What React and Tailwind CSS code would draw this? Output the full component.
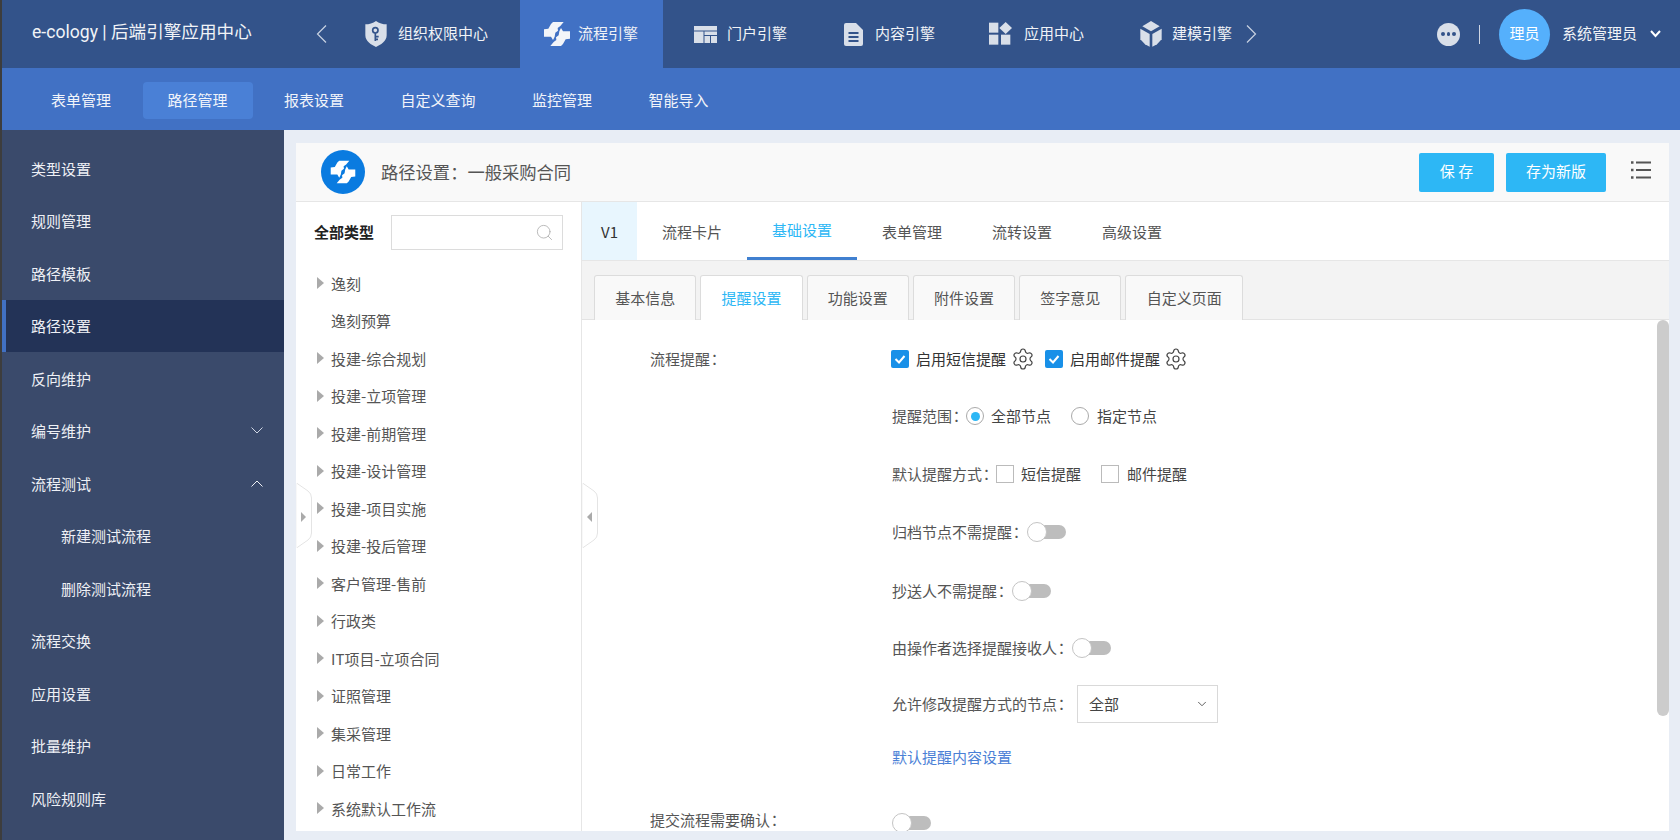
import React from "react";
import { Settings, Search, ChevronDown } from "lucide-react";

const ic = "#d9dfe9";
const FlowPaths = ({ fill }) => (
  <g fill={fill}>
    <polygon points="42,18 74,18 64,30 56,36 57,44 49,50 47,62 42,72 36,62 15,62 15,40 28,38 36,24" />
    <polygon points="66,90 34,90 44,78 52,72 51,64 59,58 61,46 66,36 72,46 93,46 93,68 80,70 72,84" />
  </g>
);
const IconShield = () => (
  <svg viewBox="0 0 108 108" className="w-[36px] h-[36px] -m-[8px]">
    <path d="M54 15 C45 22 33 25 22 25 V58 C22 76 40 87 54 93 C68 87 86 76 86 58 V25 C75 25 63 22 54 15Z" fill={ic} />
    <circle cx="52" cy="43" r="8" fill="none" stroke="#33538a" strokeWidth="5" />
    <path d="M52 51 V75 M52 62 H62 M52 70 H60" fill="none" stroke="#33538a" strokeWidth="5" />
  </svg>
);
const IconFlow = () => (
  <svg viewBox="0 0 108 108" className="w-[36px] h-[36px] -m-[6px]"><FlowPaths fill="#f3f5f9" /></svg>
);
const IconPortal = () => (
  <svg viewBox="0 0 23 17" className="w-[23px] h-[17px]" fill={ic}>
    <rect x="0" y="0" width="23" height="4.5" />
    <rect x="0" y="5.5" width="9.5" height="11.5" />
    <rect x="10.5" y="5.5" width="12.5" height="3.5" />
    <rect x="10.5" y="10" width="5.5" height="7" />
    <rect x="17" y="10" width="6" height="7" />
  </svg>
);
const IconDoc = () => (
  <svg viewBox="0 0 19 23" className="w-[19px] h-[23px]">
    <path d="M2 0 H12 L19 7 V21 A2 2 0 0 1 17 23 H2 A2 2 0 0 1 0 21 V2 A2 2 0 0 1 2 0Z" fill={ic} />
    <path d="M4.5 10 H14.5 M4.5 14 H14.5 M4.5 18 H14.5" stroke="#33538a" strokeWidth="1.8" />
  </svg>
);
const IconApps = () => (
  <svg viewBox="0 0 108 108" className="w-[36px] h-[36px] -m-[6px]" fill={ic}>
    <rect x="18" y="20" width="28" height="30" />
    <polygon points="68,18 87,36 68,54 49,36" />
    <rect x="18" y="56" width="28" height="30" />
    <rect x="54" y="56" width="28" height="30" />
  </svg>
);
const IconCube = () => (
  <svg viewBox="0 0 108 108" className="w-[36px] h-[36px] -m-[8px]" fill={ic}>
    <polygon points="54,15 80,31 54,46 28,31" />
    <polygon points="22,38 50,54 50,92 36,85 22,70" />
    <polygon points="86,38 58,54 58,92 72,85 86,70" />
  </svg>
);

const topItems = [
  { t: "组织权限中心", I: IconShield, g: "gap-[12px]", m: "ml-0" },
  { t: "流程引擎", I: IconFlow, g: "gap-[9px]", m: "ml-[7px]", active: true },
  { t: "门户引擎", I: IconPortal, g: "gap-[10px]", m: "ml-[6px]" },
  { t: "内容引擎", I: IconDoc, g: "gap-[12px]", m: "ml-[7px]" },
  { t: "应用中心", I: IconApps, g: "gap-[11px]", m: "ml-[4px]" },
  { t: "建模引擎", I: IconCube, g: "gap-[11px]", m: "ml-[7px]" },
];
const subNav = ["表单管理", "路径管理", "报表设置", "自定义查询", "监控管理", "智能导入"];
const side = [
  { t: "类型设置" }, { t: "规则管理" }, { t: "路径模板" }, { t: "路径设置", active: true },
  { t: "反向维护" }, { t: "编号维护", arrow: "down" }, { t: "流程测试", arrow: "up" },
  { t: "新建测试流程", sub: true }, { t: "删除测试流程", sub: true },
  { t: "流程交换" }, { t: "应用设置" }, { t: "批量维护" }, { t: "风险规则库" },
];
const tree = ["逸刻", "逸刻预算", "投建-综合规划", "投建-立项管理", "投建-前期管理", "投建-设计管理", "投建-项目实施", "投建-投后管理", "客户管理-售前", "行政类", "IT项目-立项合同", "证照管理", "集采管理", "日常工作", "系统默认工作流"];
const tabs = ["流程卡片", "基础设置", "表单管理", "流转设置", "高级设置"];
const subTabs = ["基本信息", "提醒设置", "功能设置", "附件设置", "签字意见", "自定义页面"];

const Colon = () => <span className="inline-block w-[14px] -indent-[3px] font-['Noto_Sans_CJK_TC',sans-serif]">：</span>;
const Label = ({ children }) => <span className="whitespace-nowrap text-[#555] pb-[2px]">{children}<Colon /></span>;
const T = ({ className = "", children }) => <span className={"whitespace-nowrap pb-[2px] " + className}>{children}</span>;
const Toggle = ({ className = "" }) => (
  <span className={"relative flex items-center ml-[1px] w-[39px] h-[20px] shrink-0 " + className}>
    <span className="ml-[10px] w-[29px] h-[14px] bg-[#bdbdbd] rounded-full" />
    <span className="absolute left-0 top-0 w-[20px] h-[20px] rounded-full bg-white border border-[#c4c4c4]" />
  </span>
);
const Check = () => (
  <span className="w-[18px] h-[18px] rounded-[2px] bg-[#1890e8] flex items-center justify-center shrink-0">
    <svg viewBox="0 0 18 18" className="w-[18px] h-[18px]"><path d="M4.5 9 L8 12.5 L13.5 6" fill="none" stroke="#fff" strokeWidth="2" /></svg>
  </span>
);
const Box = () => <span className="w-[18px] h-[18px] border border-[#bbb] bg-white shrink-0" />;
const Radio = ({ on }) => (
  <span className="w-[18px] h-[18px] rounded-full border border-[#aaa] flex items-center justify-center shrink-0">
    {on && <span className="w-[9px] h-[9px] rounded-full bg-[#2db7f5]" />}
  </span>
);
const Handle = ({ dir, className }) => (
  <svg viewBox="0 0 16 65" className={"absolute w-[16px] h-[65px] " + className}>
    <path d="M0.5 0 L12 8 Q15.5 10.5 15.5 15 V50 Q15.5 54.5 12 57 L0.5 65 Z" fill="#fff" stroke="#e4e4e4" />
    <path d="M0 0 V65" stroke="#fff" strokeWidth="1.5" />
    {dir === "r" ? <polygon points="5,29 10,34 5,39" fill="#aaa" /> : <polygon points="10,29 5,34 10,39" fill="#aaa" />}
  </svg>
);

export default function App() {
  return (
    <div className="w-[1680px] h-[840px] overflow-hidden flex flex-col border-l-2 border-[#3d3d3d] text-[15px] leading-none font-['Noto_Sans_CJK_SC','Noto_Sans',sans-serif]">
      {/* top bar */}
      <header className="h-[68px] shrink-0 bg-[#33538a] flex items-center text-[#f1f3f7]">
        <div className="w-[339px] h-full flex items-center justify-between pl-[30px] pr-[14px]">
          <span className="text-[17.6px] whitespace-nowrap pb-[2px] font-['Roboto','Noto_Sans_CJK_SC',sans-serif]">e-cology | 后端引擎应用中心</span>
          <svg viewBox="0 0 11 18" className="w-[11px] h-[18px] shrink-0"><path d="M10 0.5 L1.5 9 L10 17.5" fill="none" stroke="#c9d2e2" strokeWidth="1.2" /></svg>
        </div>
        {topItems.map(({ t, I, g, m, active }) => (
          <div key={t} className={`h-full flex items-center px-[25px] ${g} ${m} ${active ? "bg-[#4171c4]" : ""}`}>
            <I />
            <span className="whitespace-nowrap pb-[3px]">{t}</span>
          </div>
        ))}
        <svg viewBox="0 0 11 18" className="w-[11px] h-[18px] shrink-0 -ml-[11px]"><path d="M1 0.5 L9.5 9 L1 17.5" fill="none" stroke="#c9d2e2" strokeWidth="1.2" /></svg>
        <div className="ml-auto flex items-center pr-[19px]">
          <span className="w-[23px] h-[23px] rounded-full bg-[#d9dfe9] flex items-center justify-center gap-[2px]">
            <i className="w-[3.5px] h-[3.5px] rounded-full bg-[#33538a]" />
            <i className="w-[3.5px] h-[3.5px] rounded-full bg-[#33538a]" />
            <i className="w-[3.5px] h-[3.5px] rounded-full bg-[#33538a]" />
          </span>
          <span className="ml-[19px] w-px h-[19px] bg-[#cfd6e4]" />
          <span className="ml-[19px] w-[51px] h-[51px] rounded-full bg-[#55b0fc] flex items-center justify-center text-white pb-[3px]">理员</span>
          <span className="ml-[12px] whitespace-nowrap pb-[3px]">系统管理员</span>
          <svg viewBox="0 0 11 8" className="ml-[13px] w-[11px] h-[8px]"><path d="M1 1 L5.5 6 L10 1" fill="none" stroke="#fff" strokeWidth="2" /></svg>
        </div>
      </header>
      {/* sub nav */}
      <nav className="h-[62px] shrink-0 bg-[#4171c4] flex items-center gap-[6.5px] pl-[24px] pt-[3px] text-[#f1f4fa]">
        {subNav.map((t, i) => (
          <div key={t} className={`h-[37px] flex items-center px-[25px] rounded-[4px] whitespace-nowrap ${i === 1 ? "bg-[#4a80d6]" : ""}`}><T>{t}</T></div>
        ))}
      </nav>
      <div className="flex flex-1 min-h-0">
        {/* sidebar */}
        <aside className="w-[282px] shrink-0 bg-[#3a4a6b] pt-[12px] text-[#eef0f5]">
          {side.map(({ t, active, arrow, sub }) => (
            <div key={t} className={`h-[52.5px] flex items-center pr-[21px] ${active ? "bg-[#233357] border-l-[4px] border-[#4171c4] pl-[25px]" : sub ? "pl-[59px]" : "pl-[29px]"}`}>
              <span className="whitespace-nowrap">{t}</span>
              {arrow === "down" && <svg viewBox="0 0 12 7" className="ml-auto w-[12px] h-[7px]"><path d="M0.5 0.5 L6 6 L11.5 0.5" fill="none" stroke="#cfd6e4" /></svg>}
              {arrow === "up" && <svg viewBox="0 0 12 7" className="ml-auto w-[12px] h-[7px]"><path d="M0.5 6.5 L6 1 L11.5 6.5" fill="none" stroke="#eef0f5" /></svg>}
            </div>
          ))}
        </aside>
        {/* main */}
        <main className="flex-1 min-w-0 bg-[#e8edf5] pt-[13px] pl-[12px] pr-[11px] pb-[9px]">
          <div className="relative h-full bg-white flex flex-col overflow-hidden">
            <div className="h-[59px] shrink-0 bg-[#f9f9f9] border-b border-[#e6e6e6] flex items-center pl-[25px] pr-[18px]">
              <span className="w-[44px] h-[44px] rounded-full bg-[#0a7be0] flex items-center justify-center">
                <svg viewBox="0 0 108 108" className="w-[34px] h-[34px]"><FlowPaths fill="#fff" /></svg>
              </span>
              <span className="ml-[16px] text-[17.3px] text-[#555] whitespace-nowrap">路径设置：一般采购合同</span>
              <button className="ml-auto w-[75px] h-[39px] rounded-[2px] bg-[#2db7f5] text-white pb-[3px]">保 存</button>
              <button className="ml-[12px] w-[100px] h-[39px] rounded-[2px] bg-[#2db7f5] text-white pb-[3px]">存为新版</button>
              <svg viewBox="0 0 20 18" className="ml-[25px] mb-[4px] w-[20px] h-[18px]">
                <path d="M5 1.5 H20 M5 9 H20 M5 16.5 H20" stroke="#555" strokeWidth="2" />
                <path d="M0 1.5 H2.5 M0 9 H2.5 M0 16.5 H2.5" stroke="#555" strokeWidth="2.4" />
              </svg>
            </div>
            <div className="flex flex-1 min-h-0">
              {/* tree */}
              <div className="w-[286px] shrink-0 border-r border-[#e6e6e6]">
                <div className="flex items-center pl-[18px] pt-[13px]">
                  <span className="font-bold text-[#222] whitespace-nowrap pb-[2px]">全部类型</span>
                  <div className="ml-[17px] w-[172px] h-[35px] border border-[#dcdcdc] flex items-center justify-end pr-[8px]">
                    <Search size={19} strokeWidth={1} color="#aaa" />
                  </div>
                </div>
                <div className="mt-[14.5px]">
                  {tree.map((t, i) => (
                    <div key={t} className="h-[37.5px] flex items-center pl-[21px] text-[#555]">
                      {i !== 1 ? (
                        <svg viewBox="0 0 7 12" className="w-[7px] h-[12px] shrink-0"><polygon points="0,0 7,6 0,12" fill="#aaa" /></svg>
                      ) : <span className="w-[7px] shrink-0" />}
                      <span className="ml-[7px] whitespace-nowrap">{t}</span>
                    </div>
                  ))}
                </div>
              </div>
              {/* right */}
              <div className="flex-1 min-w-0 flex flex-col">
                <div className="h-[59px] shrink-0 border-b border-[#e6e6e6] flex">
                  <div className="w-[55px] bg-[#e8f6fe] flex items-center justify-center text-[#333]">V1</div>
                  {tabs.map((t, i) => (
                    <div key={t} className={`relative h-full flex items-center px-[25px] whitespace-nowrap ${i === 1 ? "text-[#2db7f5] border-b-[3px] border-[#4080d0]" : "text-[#555]"}`}>{t}</div>
                  ))}
                </div>
                <div className="h-[59px] shrink-0 bg-[#f3f3f3] border-b border-[#e3e3e3] flex gap-[4px] pt-[14px] pl-[12px]">
                  {subTabs.map((t, i) => (
                    <div key={t} className={`h-[45px] px-[20.15px] flex items-center border border-b-0 border-[#dcdcdc] rounded-t-[3px] whitespace-nowrap ${i === 1 ? "bg-white text-[#2db7f5]" : "bg-[#f9f9f9] text-[#555]"}`}><T>{t}</T></div>
                  ))}
                </div>
                <div className="relative flex-1 min-h-0 overflow-hidden pl-[68px] text-[#444]">
                  <div className="absolute top-0 right-0 w-[12px] h-[396px] rounded-full bg-[#ccc]" />
                  <div className="mt-[20px] h-[38px] flex items-center">
                    <span className="w-[241px] shrink-0 flex"><Label>流程提醒</Label></span>
                    <Check /><T className="ml-[7px] text-[#333]">启用短信提醒</T>
                    <Settings size={24} strokeWidth={1.2} color="#444" className="ml-[5px]" />
                    <span className="ml-[10px]"><Check /></span><T className="ml-[7px] text-[#333]">启用邮件提醒</T>
                    <Settings size={24} strokeWidth={1.2} color="#444" className="ml-[4px]" />
                  </div>
                  <div className="mt-[19px] h-[38px] flex items-center ml-[242px]">
                    <Label>提醒范围</Label>
                    <Radio on /><T className="ml-[7px]">全部节点</T>
                    <span className="ml-[20px]"><Radio /></span><T className="ml-[8px]">指定节点</T>
                  </div>
                  <div className="mt-[20px] h-[38px] flex items-center ml-[242px]">
                    <Label>默认提醒方式</Label>
                    <Box /><T className="ml-[7px]">短信提醒</T>
                    <span className="ml-[20px] flex"><Box /></span><T className="ml-[8px]">邮件提醒</T>
                  </div>
                  <div className="mt-[20px] h-[38px] flex items-center ml-[242px]"><Label>归档节点不需提醒</Label><Toggle /></div>
                  <div className="mt-[21px] h-[38px] flex items-center ml-[242px]"><Label>抄送人不需提醒</Label><Toggle /></div>
                  <div className="mt-[19px] h-[38px] flex items-center ml-[242px]"><Label>由操作者选择提醒接收人</Label><Toggle /></div>
                  <div className="mt-[18px] h-[38px] flex items-center ml-[242px]">
                    <Label>允许修改提醒方式的节点</Label>
                    <div className="ml-[6px] w-[141px] h-[38px] border border-[#d9d9d9] flex items-center justify-between pl-[11px] pr-[8px]">
                      <T>全部</T><ChevronDown size={14} strokeWidth={1.6} color="#555" />
                    </div>
                  </div>
                  <div className="mt-[15px] h-[38px] flex items-center ml-[242px] text-[#4a80d6]"><T>默认提醒内容设置</T></div>
                  <div className="mt-[25px] h-[38px] flex items-center">
                    <span className="w-[241px] shrink-0 flex"><Label>提交流程需要确认</Label></span>
                    <Toggle className="mt-[6px]" />
                  </div>
                </div>
              </div>
            </div>
            <Handle dir="r" className="left-0 top-[340px]" />
            <Handle dir="l" className="left-[286px] top-[340px]" />
          </div>
        </main>
      </div>
    </div>
  );
}
